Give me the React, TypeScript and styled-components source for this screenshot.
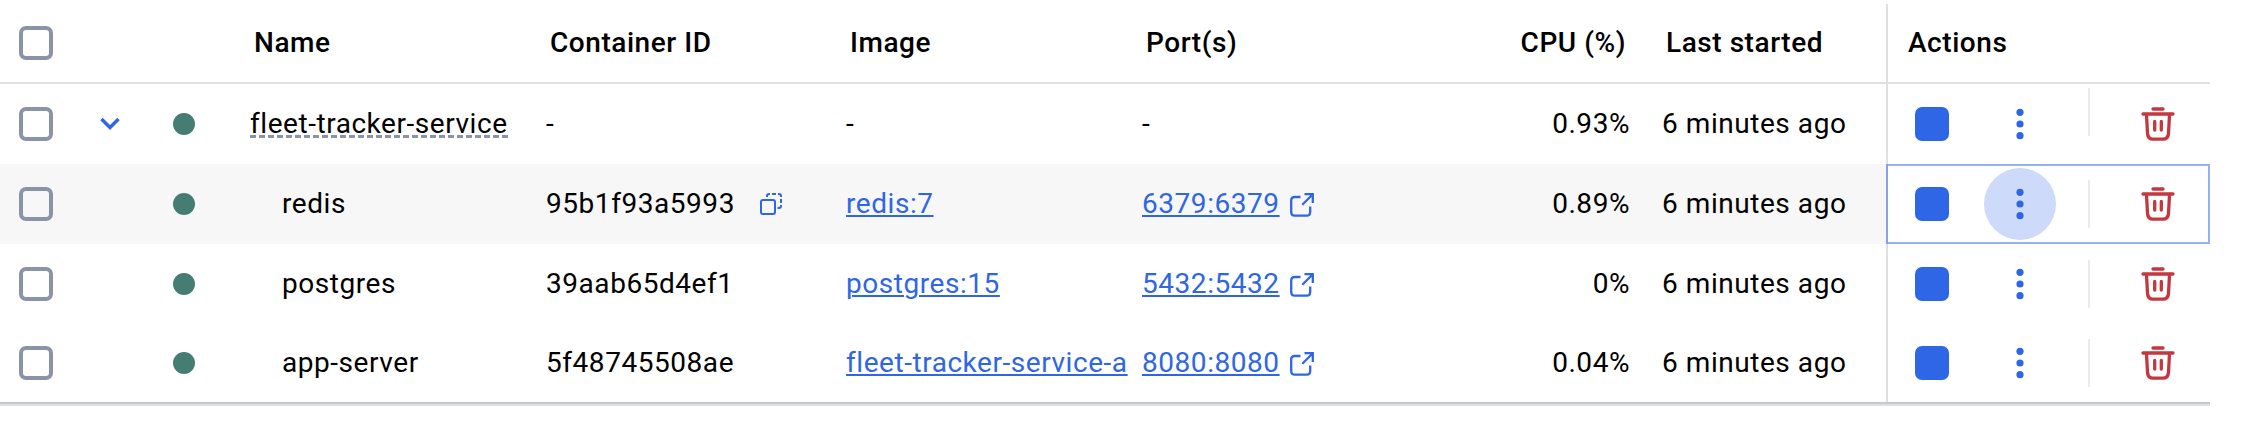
import React from "react";
import styled, { createGlobalStyle, css } from "styled-components";

const Global = createGlobalStyle`
  body { margin: 0; background: #fff; overflow: hidden; }
  * { box-sizing: border-box; }
`;

const columns = "72px 76px 101px 293px 300px 297px 359px 154px 234px 324px";

const Table = styled.div`
  width: 2210px;
  margin-top: 4px;
  font-family: Roboto, "Liberation Sans", sans-serif;
  font-size: 28px;
  line-height: 40px;
  letter-spacing: 0.55px;
  color: #000;
  border-bottom: 2px solid #e0e0e0;
`;

const Row = styled.div<{ $hovered?: boolean; $last?: boolean }>`
  display: grid;
  grid-template-columns: ${columns};
  height: 80px;
  background: ${(p) => (p.$hovered ? "#f7f7f7" : "#fff")};
  ${(p) => p.$last && css`border-bottom: 2px solid #c4c8d1;`}
`;

const HeaderRow = styled(Row)`
  font-weight: 500;
  border-bottom: 2px solid #e0e0e0;
`;

const Cell = styled.div<{ $pad?: number; $end?: number }>`
  display: flex;
  align-items: center;
  min-width: 0;
  white-space: nowrap;
  padding-left: ${(p) => p.$pad ?? 0}px;
  ${(p) => p.$end !== undefined && css`justify-content: flex-end; padding-right: ${p.$end}px;`}
`;

const Checkbox = styled.div`
  width: 34px;
  height: 34px;
  margin-left: 19px;
  border: 4px solid #8b93a8;
  border-radius: 7px;
`;

const StatusDot = styled.div`
  width: 22px;
  height: 22px;
  margin-left: 25px;
  border-radius: 50%;
  background: #457d73;
`;

const ServiceName = styled.span`
  height: 36px;
  line-height: 36px;
  display: inline-block;
  background: repeating-linear-gradient(90deg, #8b93a8 0 6px, transparent 6px 9px) 0 29px / 100% 3px no-repeat;
`;

const Link = styled.a`
  color: #2e66e5;
  text-decoration: underline;
  text-decoration-thickness: 2px;
  text-underline-offset: 2px;
`;

const ActionsCell = styled.div<{ $focused?: boolean }>`
  display: flex;
  align-items: center;
  background: #fff;
  border-left: 2px solid #e0e0e0;
  padding-left: 27px;
  ${(p) => p.$focused && css`
    border-left-color: #87a2e6;
    box-shadow: inset 0 2px #97b1f4, inset -2px 0 #97b1f4, inset 0 -2px #97b1f4;
  `}
`;

const ActionsHeader = styled(ActionsCell)`
  padding-left: 20px;
`;

const StopButton = styled.button`
  width: 34px;
  height: 34px;
  padding: 0;
  border: 0;
  border-radius: 7px;
  background: #2e66e5;
`;

const MenuButton = styled.button<{ $active?: boolean }>`
  width: 72px;
  height: 72px;
  margin-left: 35px;
  padding: 0;
  border: 0;
  border-radius: 50%;
  background: ${(p) => (p.$active ? "#cddaf9" : "transparent")};
  display: grid;
  place-items: center;
`;

const Divider = styled.div<{ $raised?: boolean }>`
  width: 2px;
  height: 48px;
  margin-left: 32px;
  margin-bottom: ${(p) => (p.$raised ? 24 : 0)}px;
  background: #ebebeb;
`;

const DeleteButton = styled.button`
  width: 34px;
  height: 34px;
  margin-left: 51px;
  padding: 0;
  border: 0;
  background: none;
  display: flex;
`;

const CopyIcon = styled.svg`
  margin-left: 25px;
`;

const ExternalIcon = styled.svg`
  margin-left: 10px;
  margin-top: 2px;
`;

const Chevron = () => (
  <svg width="20" height="14" viewBox="0 0 20 14" fill="none" stroke="#2e66e5" strokeWidth="3.4">
    <path d="M1.5 2 10 10.5 18.5 2" />
  </svg>
);

const Copy = () => (
  <CopyIcon width="22" height="22" viewBox="0 0 22 22" fill="none" stroke="#2e66e5" strokeWidth="2">
    <rect x="1" y="7" width="14" height="14" rx="2" />
    <path d="M7 4V3Q7 1 9 1H10M12 1h4M18 1h1Q21 1 21 3V4M21 6v4M21 12v1Q21 15 19 15H17.5" />
  </CopyIcon>
);

const External = () => (
  <ExternalIcon width="24" height="24" viewBox="0 0 24 24" fill="none" stroke="#2e66e5" strokeWidth="2.3">
    <path d="M10.5 4H5Q1.2 4 1.2 7.5V19Q1.2 22.7 5 22.7H16.5Q20.2 22.7 20.2 19V13.5" />
    <path d="M14.5 1.2H22.8V10M22.8 1.2 12.3 11.7" />
  </ExternalIcon>
);

const Dots = () => (
  <svg width="8" height="32" viewBox="0 0 8 32" fill="#2e66e5">
    <circle cx="4" cy="4.3" r="3.6" />
    <circle cx="4" cy="16" r="3.6" />
    <circle cx="4" cy="27.7" r="3.6" />
  </svg>
);

const Trash = () => (
  <svg width="34" height="34" viewBox="0 0 34 34" fill="none" stroke="#c5373f" strokeWidth="3.3" strokeLinecap="round">
    <path d="M12 2h10M2 7h30M13.7 14.4v8.600M20.300 14.400v8.600" />
    <path d="M5.500 7.500 6.500 26.500Q7 32.200 12 32.200H22Q27 32.200 27.500 26.500L28.500 7.500" />
  </svg>
);

interface Container {
  name: string;
  id: string;
  image: string;
  port: string;
  cpu: string;
  group?: boolean;
  hovered?: boolean;
}

const containers: Container[] = [
  { name: "fleet-tracker-service", id: "-", image: "-", port: "-", cpu: "0.93%", group: true },
  { name: "redis", id: "95b1f93a5993", image: "redis:7", port: "6379:6379", cpu: "0.89%", hovered: true },
  { name: "postgres", id: "39aab65d4ef1", image: "postgres:15", port: "5432:5432", cpu: "0%" },
  { name: "app-server", id: "5f48745508ae", image: "fleet-tracker-service-a", port: "8080:8080", cpu: "0.04%" },
];

export default function App() {
  return (
    <>
      <Global />
      <Table>
        <HeaderRow>
          <Cell><Checkbox /></Cell>
          <Cell />
          <Cell />
          <Cell $pad={5}>Name</Cell>
          <Cell $pad={8}>Container ID</Cell>
          <Cell $pad={8}>Image</Cell>
          <Cell $pad={7}>Port(s)</Cell>
          <Cell $end={26}>CPU (%)</Cell>
          <Cell $pad={14}>Last started</Cell>
          <ActionsHeader>Actions</ActionsHeader>
        </HeaderRow>
        {containers.map((c, i) => (
          <Row key={c.name} $hovered={c.hovered} $last={i === containers.length - 1}>
            <Cell><Checkbox /></Cell>
            <Cell $pad={28}>{c.group && <Chevron />}</Cell>
            <Cell><StatusDot /></Cell>
            <Cell $pad={c.group ? 1 : 33}>{c.group ? <ServiceName>{c.name}</ServiceName> : c.name}</Cell>
            <Cell $pad={4}>{c.id}{c.hovered && <Copy />}</Cell>
            <Cell $pad={4}>{c.group ? c.image : <Link>{c.image}</Link>}</Cell>
            <Cell $pad={3}>{c.group ? c.port : <><Link>{c.port}</Link><External /></>}</Cell>
            <Cell $end={22}>{c.cpu}</Cell>
            <Cell $pad={10}>6 minutes ago</Cell>
            <ActionsCell $focused={c.hovered}>
              <StopButton aria-label="Stop" />
              <MenuButton aria-label="More" $active={c.hovered}><Dots /></MenuButton>
              <Divider $raised={c.group} />
              <DeleteButton aria-label="Delete"><Trash /></DeleteButton>
            </ActionsCell>
          </Row>
        ))}
      </Table>
    </>
  );
}
